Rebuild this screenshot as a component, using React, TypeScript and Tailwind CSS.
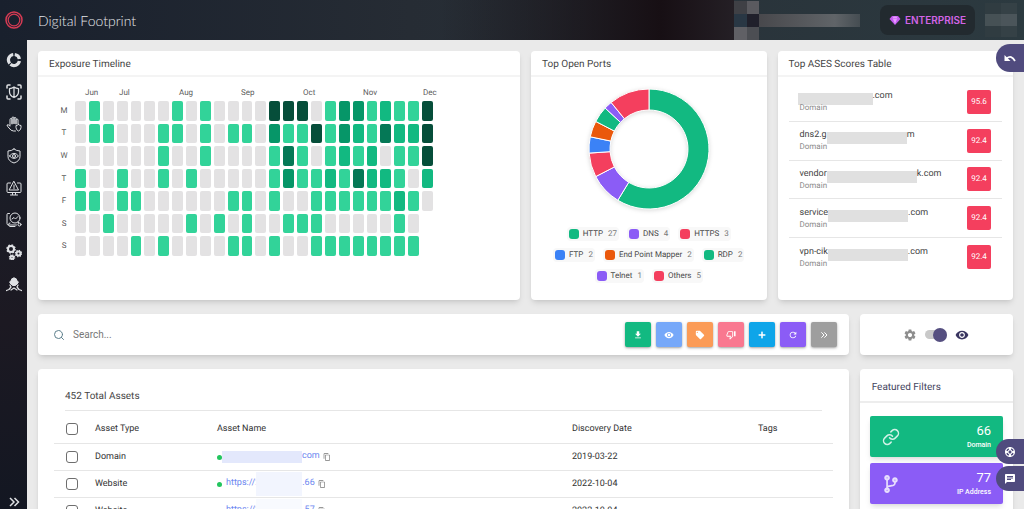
import { useState } from 'react';
import type { ReactNode } from 'react';
import {
  MdChat,
  MdContentCopy,
  MdDownload,
  MdLocalOffer,
  MdOutlineThumbDown,
  MdRefresh,
  MdSettings,
  MdSupport,
  MdVisibility,
} from 'react-icons/md';
import { FaCodeBranch, FaPlus } from 'react-icons/fa';
import { FiLink, FiSearch } from 'react-icons/fi';

const DAYS = ['M', 'T', 'W', 'T', 'F', 'S', 'S'];
const MONTHS = [
  { name: 'Jun', width: 'w-[34px]' },
  { name: 'Jul', width: 'w-[60px]' },
  { name: 'Aug', width: 'w-[62px]' },
  { name: 'Sep', width: 'w-[62px]' },
  { name: 'Oct', width: 'w-[60px]' },
  { name: 'Nov', width: 'w-[60px]' },
  { name: 'Dec', width: 'w-[34px]' },
];

// One string per weekday, one digit per week. 0 = nothing found, 5 = most.
const TIMELINE = [
  '01000001010000555013312115',
  '01100011010110311513214225',
  '00000010010000141012120115',
  '10010010100000131121422102',
  '11011000000110100111111210',
  '0010000010101001110000010',
  '0000101000011010011111111',
];

const LEVELS = [
  'bg-[#e3e2e3]',
  'bg-[#32d399]',
  'bg-[#12b981]',
  'bg-[#069668]',
  'bg-[#057856]',
  'bg-[#064e3a]',
];

const PORTS = [
  { name: 'HTTP', count: 27, fill: '#12b981', dot: 'bg-[#12b981]' },
  { name: 'DNS', count: 4, fill: '#8b5cf6', dot: 'bg-[#8b5cf6]' },
  { name: 'HTTPS', count: 3, fill: '#f43f5e', dot: 'bg-[#f43f5e]' },
  { name: 'FTP', count: 2, fill: '#3b82f6', dot: 'bg-[#3b82f6]' },
  { name: 'End Point Mapper', count: 2, fill: '#ea580c', dot: 'bg-[#ea580c]' },
  { name: 'RDP', count: 2, fill: '#12b981', dot: 'bg-[#12b981]' },
  { name: 'Telnet', count: 1, fill: '#8b5cf6', dot: 'bg-[#8b5cf6]' },
  { name: 'Others', count: 5, fill: '#f43f5e', dot: 'bg-[#f43f5e]' },
];

const SCORES = [
  { start: '', end: '.com', mask: '-ml-0.5 w-[75px]', score: '95.6' },
  { start: 'dns2.g', end: 'm', mask: 'w-20', score: '92.4' },
  { start: 'vendor', end: 'k.com', mask: 'w-[90px]', score: '92.4' },
  { start: 'service', end: '.com', mask: 'w-20', score: '92.4' },
  { start: 'vpn-cik', end: '.com', mask: 'w-20', score: '92.4' },
];

const ACTIONS = [
  { label: 'Download', color: 'bg-[#12b981]', icon: <MdDownload /> },
  { label: 'Watch', color: 'bg-[#76a8f9]', icon: <MdVisibility /> },
  { label: 'Tag', color: 'bg-[#fb9b56]', icon: <MdLocalOffer /> },
  { label: 'Reject', color: 'bg-[#f97890]', icon: <MdOutlineThumbDown /> },
  { label: 'Add', color: 'bg-[#0ea5e9]', icon: <FaPlus className="size-2" /> },
  { label: 'Refresh', color: 'bg-[#8b5cf6]', icon: <MdRefresh /> },
  { label: 'More', color: 'bg-[#9e9e9e]', icon: <DoubleChevron className="size-2" /> },
];

const ASSETS = [
  { type: 'Domain', start: '', end: 'com', mask: '-ml-1 h-3 w-20 bg-[#e3e8fc]', date: '2019-03-22' },
  { type: 'Website', start: 'https://2', end: '.66', mask: '-ml-1 h-6 w-[46px] bg-[#f2f5fe]', date: '2022-10-04' },
  { type: 'Website', start: 'https://2', end: '.57', mask: '-ml-1 h-6 w-[46px] bg-[#f8fafe]', date: '2022-10-04' },
];

function DoubleChevron({ className }: { className: string }) {
  return (
    <svg viewBox="0 0 24 24" className={className} fill="none" stroke="currentColor" strokeWidth="3">
      <path d="M4 4l8 8-8 8M13 4l8 8-8 8" />
    </svg>
  );
}

function NavIcon({ children }: { children: ReactNode }) {
  return (
    <svg
      viewBox="0 0 32 32"
      className="size-4"
      fill="none"
      stroke="currentColor"
      strokeWidth="2"
      strokeLinecap="round"
      strokeLinejoin="round"
    >
      {children}
    </svg>
  );
}

function Gear({ cx, cy, r }: { cx: number; cy: number; r: number }) {
  // teeth are a dashed outer ring, eight to a turn
  const tooth = (2 * Math.PI * (r + 2)) / 16;
  return (
    <g strokeLinecap="butt">
      <circle cx={cx} cy={cy} r={r} strokeWidth="4" />
      <circle cx={cx} cy={cy} r={r + 2} strokeWidth="3" strokeDasharray={`${tooth} ${tooth}`} />
    </g>
  );
}

const NAV = [
  {
    label: 'Overview',
    icon: (
      <NavIcon>
        <g strokeWidth="6.500" strokeLinecap="butt">
          <path d="M17.500 5A11 11 0 0 1 26.800 14" />
          <path d="M26.800 18A11 11 0 0 1 9 24.500" />
          <path d="M7.500 23A11 11 0 0 1 14.500 5" />
        </g>
      </NavIcon>
    ),
  },
  {
    label: 'Protection',
    icon: (
      <NavIcon>
        <path strokeWidth="3" d="M2 8V4q0-2 2-2h4M24 2h4q2 0 2 2v4M30 24v4q0 2-2 2h-4M8 30H4q-2 0-2-2v-4" />
        <path strokeWidth="2.500" d="M16 6q4 3 9 3v7q0 7-9 11-9-4-9-11V9q5 0 9-3zM16 7v19" />
      </NavIcon>
    ),
  },
  {
    label: 'Threats',
    icon: (
      <NavIcon>
        <path d="M8 19V7q0-2 2-2t2 2v9M12 15V4q0-2 2-2t2 2v11M16 15V5q0-2 2-2t2 2v11M20 15V8q0-2 2-2t2 2v8M8 20q-4-4-6-2 0 2 4 6 4 6 9 6h4" />
        <path d="M25 17q2 2 5 2v4q0 5-5 7-5-2-5-7v-4q3 0 5-2z" />
      </NavIcon>
    ),
  },
  {
    label: 'Monitoring',
    icon: (
      <NavIcon>
        <path d="M16 2q5 4 12 4v11q0 9-12 13Q4 26 4 17V6q7 0 12-4z" />
        <path d="M7 16q9-11 18 0-9 10-18 0z" />
        <circle cx="16" cy="16" r="3" />
      </NavIcon>
    ),
  },
  {
    label: 'Alerts',
    icon: (
      <NavIcon>
        <path d="M9 6H4q-2 0-2 2v15q0 2 2 2h24q2 0 2-2V8q0-2-2-2h-5M13 25v4m6-4v4M9 30h14" />
        <path d="M16 3l9 17H7zM16 10v5m0 2v0.500" />
      </NavIcon>
    ),
  },
  {
    label: 'Research',
    icon: (
      <NavIcon>
        <path d="M7 3H4q-2 0-2 2v18q0 3 3 3h16M8 22q-3 0-3 3t3 4h10" />
        <circle cx="18" cy="12" r="10" />
        <path d="M12 14l4-3 3 3 5-5M24 20l2 2" />
        <circle cx="27" cy="25" r="3" />
      </NavIcon>
    ),
  },
  {
    label: 'Settings',
    icon: (
      <NavIcon>
        <Gear cx={10} cy={10} r={6} />
        <Gear cx={25} cy={19} r={4} />
        <Gear cx={12} cy={27} r={3} />
      </NavIcon>
    ),
  },
  {
    label: 'Agents',
    icon: (
      <NavIcon>
        <path fill="currentColor" d="M16 4q6 0 6 6 4 1 2 4l-5 5h-6l-5-5q-2-3 2-4 0-6 6-6z" />
        <path strokeWidth="2.500" d="M8 18l2 4-4 5-5 2M24 18l-2 4 4 5 5 2M10 28l6-4 6 4" />
      </NavIcon>
    ),
  },
];

function Card({ title, className, children }: { title: string; className: string; children: ReactNode }) {
  return (
    <section className={`rounded-sm bg-white shadow-md ${className}`}>
      <h2 className="border-b-2 border-[#f4f4f4] px-[11px] pt-[3px] text-[10px] leading-[21px] text-[#454545]">
        {title}
      </h2>
      {children}
    </section>
  );
}

function Timeline() {
  return (
    <div className="flex flex-col pt-2 pl-[22px] text-[8px] text-[#5c5c5c]">
      <div className="flex pl-[25px] leading-4">
        {MONTHS.map((m) => (
          <span key={m.name} className={m.width}>
            {m.name}
          </span>
        ))}
      </div>
      <div className="flex h-[155px] w-[373px] flex-col gap-[3px]">
        {TIMELINE.map((row, i) => (
          <div key={i} className="flex flex-1 items-stretch gap-[7px]">
            <span className="flex w-2 items-center justify-center">{DAYS[i]}</span>
            <div className="grid flex-1 grid-cols-[repeat(26,1fr)] gap-[3px]">
              {row.split('').map((level, week) => (
                <div key={week} className={`rounded-xs ${LEVELS[Number(level)]}`} />
              ))}
            </div>
          </div>
        ))}
      </div>
    </div>
  );
}

function PortsChart() {
  const total = PORTS.reduce((sum, p) => sum + p.count, 0);
  let used = 0;

  const point = (radius: number, share: number) => {
    const angle = share * 2 * Math.PI;
    return `${66 + radius * Math.sin(angle)} ${66 - radius * Math.cos(angle)}`;
  };

  return (
    <div className="flex flex-col items-center pt-[6px]">
      <svg viewBox="0 0 132 132" className="size-[132px] drop-shadow-sm" role="img" aria-label="Open ports">
        {PORTS.map((p) => {
          const from = used / total;
          used += p.count;
          const to = used / total;
          const large = to - from > 0.5 ? 1 : 0;
          return (
            <path
              key={p.name}
              fill={p.fill}
              stroke="#fff"
              d={`M${point(60, from)}A60 60 0 ${large} 1 ${point(60, to)}L${point(39, to)}A39 39 0 ${large} 0 ${point(39, from)}Z`}
            />
          );
        })}
      </svg>
      <ul className="mt-3 flex w-[204px] flex-wrap justify-center gap-x-2 gap-y-[7px] text-[8px] leading-[14px] text-[#4a4a4a]">
        {PORTS.map((p) => (
          <li key={p.name} className="flex items-center gap-1 rounded-sm bg-[#f8f8f8] px-0.5">
            <span className={`size-[10px] rounded-[3px] ${p.dot}`} />
            {p.name}
            <span className="pl-px text-[#777]">{p.count}</span>
          </li>
        ))}
      </ul>
    </div>
  );
}

function ScoreList() {
  return (
    <ul className="mx-[11px] mt-[6px] flex h-[193px] flex-col divide-y divide-[#e6e6e6]">
      {SCORES.map((s, i) => (
        <li key={i} className="flex flex-1 items-center justify-between px-[11px]">
          <div className="pt-0.5">
            <p className="flex h-[11px] items-start text-[9px] leading-[11px] text-[#454545]">
              {s.start}
              <span className={`mt-0.5 h-3 bg-[#e0e0e0] ${s.mask}`} />
              {s.end}
            </p>
            <p className="text-[8px] leading-3 text-[#8b8b8b]">Domain</p>
          </div>
          <span className="flex size-6 items-center justify-center rounded-xs bg-[#f43f5e] text-[8px] text-white">
            {s.score}
          </span>
        </li>
      ))}
    </ul>
  );
}

function Checkbox({ label }: { label: string }) {
  return (
    <input
      type="checkbox"
      aria-label={label}
      className="block size-3 appearance-none rounded-[3px] border border-[#6e6e6e] bg-white checked:bg-[#504b7e]"
    />
  );
}

function AssetTable() {
  return (
    <section className="col-span-10 rounded-sm bg-white px-4 pt-[18px] shadow-md">
      <h2 className="mx-[11px] border-b border-[#e6e6e6] pb-[3px] text-[10px] leading-5 text-[#454545]">
        452 Total Assets
      </h2>
      <table className="w-full table-fixed text-left text-[9px] text-[#333]">
        <thead>
          <tr className="h-8 border-b border-[#e6e6e6]">
            <th className="w-[41px] pt-1 pl-3">
              <Checkbox label="Select all" />
            </th>
            <th className="w-[122px] pt-[6px] font-normal">Asset Type</th>
            <th className="w-[355px] pt-[6px] font-normal">Asset Name</th>
            <th className="w-[186px] pt-[6px] font-normal">Discovery Date</th>
            <th className="pt-[6px] font-normal">Tags</th>
          </tr>
        </thead>
        <tbody>
          {ASSETS.map((a, i) => (
            <tr key={i} className="h-[27px] border-b border-[#e6e6e6]">
              <td className="pl-3">
                <Checkbox label={`Select ${a.type}`} />
              </td>
              <td className="pt-0.5">{a.type}</td>
              <td>
                <div className="flex h-[26px] items-center pt-px">
                  <span className="mr-1 size-[5px] rounded-full bg-[#22c55e]" />
                  <a href="#asset" className="flex items-center text-[#6c87f0]">
                    {a.start}
                    <span className={a.mask} />
                    {a.end}
                  </a>
                  <button type="button" aria-label="Copy" className="ml-[3px] text-[#777]">
                    <MdContentCopy className="size-2" />
                  </button>
                </div>
              </td>
              <td className="pt-0.5">{a.date}</td>
              <td />
            </tr>
          ))}
        </tbody>
      </table>
    </section>
  );
}

function FilterButton({ icon, count, label, color }: { icon: ReactNode; count: number; label: string; color: string }) {
  return (
    <button
      type="button"
      className={`flex h-[41px] w-full items-center justify-between rounded-xs px-3 text-white shadow-md ${color}`}
    >
      {icon}
      <span className="flex flex-col items-end">
        <span className="text-[13px] leading-4">{count}</span>
        <span className="text-[7px] leading-3 font-medium">{label}</span>
      </span>
    </button>
  );
}

function Header() {
  return (
    <header className="flex h-10 shrink-0 items-center bg-linear-to-r from-[#19202d] via-[#262c34] via-40% to-[#2c3a40]">
      <div className="flex h-full flex-1 items-center bg-linear-to-r from-transparent from-60% via-[#170f14] via-90% to-[#241f25]">
        <svg viewBox="0 0 20 20" className="mr-[14px] ml-1 size-5" fill="none" stroke="#d63b54">
          <circle cx="10" cy="10" r="8" strokeWidth="1.500" />
          <circle cx="10" cy="10" r="5.800" strokeWidth="1.200" />
        </svg>
        <h1 className="font-['Lato',sans-serif] text-[14px] font-light text-[#e4e6ea]">Digital Footprint</h1>
      </div>
      <div className="grid h-[39px] w-[25px] grid-cols-2 grid-rows-3">
        <span className="bg-[#3f4045]" />
        <span className="bg-[#5a5a5f]" />
        <span className="bg-[#293744]" />
        <span className="bg-[#20202b]" />
        <span className="bg-[#606065]" />
        <span className="bg-[#4c4e53]" />
      </div>
      <div className="mr-5 h-[13px] w-[101px] bg-linear-to-r from-[#48484c] via-[#606468] via-75% to-[#454d52]" />
      <button
        type="button"
        className="flex h-[30px] w-[95px] items-center justify-center gap-1 rounded-lg bg-[#222a2f] font-['Inter',sans-serif] text-[10px] font-semibold text-[#d264e6]"
      >
        <svg viewBox="0 0 24 24" className="size-3">
          <path fill="#c35bf0" d="M6 4h12l5 6-11 12L1 10z" />
          <path fill="#e79bff" d="M8 10h8l-4 10zM9 5h6l2 4H7z" />
        </svg>
        ENTERPRISE
      </button>
      <div className="mr-[7px] ml-[10px] grid h-[34px] w-8 grid-cols-2 grid-rows-3">
        <span className="bg-[#303c41]" />
        <span className="bg-[#354146]" />
        <span className="bg-[#465155]" />
        <span className="bg-[#4b555a]" />
        <span className="bg-[#303c41]" />
        <span className="bg-[#354146]" />
      </div>
    </header>
  );
}

export default function App() {
  const [visible, setVisible] = useState(true);

  return (
    <div className="relative flex h-screen flex-col overflow-hidden bg-[#eaeaea] font-['Roboto',sans-serif] [text-rendering:geometricPrecision]">
      <Header />
      <div className="flex min-h-0 flex-1">
        <nav className="flex w-[27px] shrink-0 flex-col items-center bg-linear-to-b from-[#19212c] via-[#1c1922] via-60% to-[#131722] pt-3 pb-px text-[#dfe1e4]">
          <div className="flex flex-1 flex-col gap-4">
            {NAV.map((item) => (
              <a key={item.label} href="#nav" aria-label={item.label}>
                {item.icon}
              </a>
            ))}
          </div>
          <button type="button" aria-label="Expand menu">
            <DoubleChevron className="size-3" />
          </button>
        </nav>

        <main className="grid flex-1 auto-rows-max grid-cols-12 gap-x-[11px] gap-y-[14px] overflow-hidden px-[11px] pt-[11px]">
          <Card title="Exposure Timeline" className="col-span-6 h-[249px]">
            <Timeline />
          </Card>
          <Card title="Top Open Ports" className="col-span-3 h-[249px]">
            <PortsChart />
          </Card>
          <Card title="Top ASES Scores Table" className="col-span-3 h-[249px]">
            <ScoreList />
          </Card>

          <div className="col-span-10 flex h-[41px] items-center rounded-sm bg-white pr-3 pl-[15px] shadow-md">
            <FiSearch className="mr-2 size-3 text-[#5d7f8c]" />
            <input
              type="search"
              aria-label="Search"
              placeholder="Search..."
              className="min-w-0 flex-1 text-[10px] outline-none placeholder:text-[#777]"
            />
            <div className="flex gap-[5px]">
              {ACTIONS.map((a) => (
                <button
                  key={a.label}
                  type="button"
                  aria-label={a.label}
                  className={`flex h-[25px] w-[26px] items-center justify-center rounded-xs text-[10px] text-white shadow-sm shadow-black/30 ${a.color}`}
                >
                  {a.icon}
                </button>
              ))}
            </div>
          </div>
          <div className="col-span-2 flex h-[41px] items-center justify-center gap-2 rounded-sm bg-white shadow-md">
            <MdSettings className="size-[14px] text-[#8e8e8e]" />
            <label className="flex w-[22px] cursor-pointer items-center">
              <input
                type="checkbox"
                aria-label="Show watched"
                checked={visible}
                onChange={(e) => setVisible(e.target.checked)}
                className="flex h-[9px] w-full appearance-none items-center rounded-full bg-[#c9c9c9] before:size-[14px] before:shrink-0 before:rounded-full before:bg-[#554f80] checked:justify-end"
              />
            </label>
            <MdVisibility className="size-[14px] text-[#393560]" />
          </div>

          <AssetTable />
          <section className="col-span-2 rounded-sm bg-white shadow-md">
            <h2 className="border-b-2 border-[#ededed] px-3 pt-[9px] pb-[3px] text-[10px] leading-5 text-[#454560]">
              Featured Filters
            </h2>
            <div className="flex flex-col gap-[6px] px-[10px] pt-[13px]">
              <FilterButton
                icon={<FiLink className="size-[18px] text-white/80" />}
                count={66}
                label="Domain"
                color="bg-[#12b981]"
              />
              <FilterButton
                icon={<FaCodeBranch className="size-[18px] text-white/80" />}
                count={77}
                label="IP Address"
                color="bg-[#8b5cf6]"
              />
            </div>
          </section>
        </main>
      </div>

      {/* floating tabs on the right edge */}
      <button
        type="button"
        aria-label="Undo"
        className="absolute top-11 right-0 flex h-7 w-7 items-center justify-center rounded-l-full bg-[#504b7e] text-white"
      >
        <svg viewBox="0 0 24 24" className="size-3" fill="none" stroke="currentColor" strokeWidth="3.500">
          <path d="M5 13q10-8 17 5" />
          <path fill="currentColor" stroke="none" d="M1 6v12h12z" />
        </svg>
      </button>
      <div className="absolute right-0 bottom-[18px] flex flex-col gap-0.5 text-white">
        <button
          type="button"
          aria-label="Help"
          className="flex h-[25px] w-7 items-center justify-center rounded-l-full bg-[#504b7e]"
        >
          <MdSupport className="size-3" />
        </button>
        <button
          type="button"
          aria-label="Chat"
          className="flex h-[25px] w-7 items-center justify-center rounded-l-full bg-[#504b7e]"
        >
          <MdChat className="size-3" />
        </button>
      </div>
    </div>
  );
}
